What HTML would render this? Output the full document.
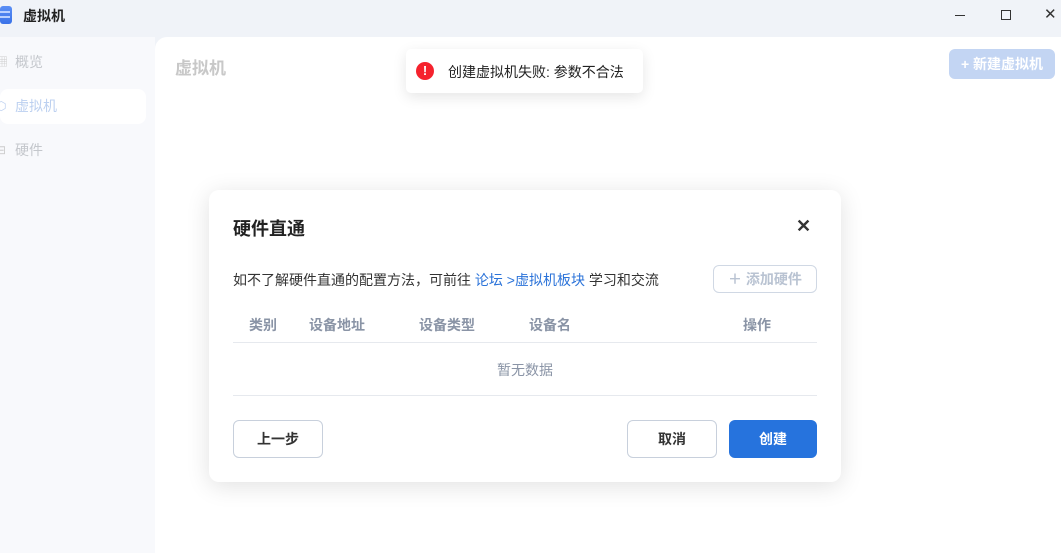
<!DOCTYPE html>
<html><head><meta charset="utf-8"><style>
*{margin:0;padding:0;box-sizing:border-box}
body{width:1061px;height:553px;overflow:hidden;background:#f0f3f8;font-family:"Liberation Sans","Noto Sans CJK SC",sans-serif;position:relative;color:#333}
.abs{position:absolute}
.side{left:0;top:37px;width:155px;height:516px;background:#f8f9fc}
.main{left:155px;top:37px;width:906px;height:516px;background:#fff;border-top-left-radius:12px}
.nav{left:0;width:146px;height:35px;font-size:14px;color:#c4c7cc;padding-left:15px;line-height:35px}
.dlg{left:209px;top:190px;width:632px;height:292px;background:#fff;border-radius:10px;box-shadow:0 4px 24px rgba(0,0,0,.12)}
.btn{position:absolute;height:38px;border-radius:6px;font-size:14px;font-weight:bold;text-align:center;line-height:36px}
.th{position:absolute;top:125px;font-size:14px;font-weight:bold;color:#8a94a6}
</style></head><body>
<div class="abs" style="left:0;top:6px;width:12px;height:18px;border-radius:3px;background:linear-gradient(#5b8ff5,#3a72e8)"></div>
<div class="abs" style="left:0;top:11px;width:10px;height:2px;background:#b9d0ff"></div>
<div class="abs" style="left:0;top:16px;width:10px;height:2px;background:#b9d0ff"></div>
<div class="abs" style="left:23px;top:6px;font-size:14px;font-weight:bold;color:#222">虚拟机</div>
<div class="abs" style="left:955px;top:15px;width:10px;height:1px;background:#333"></div>
<div class="abs" style="left:1001px;top:10px;width:10px;height:10px;border:1px solid #333"></div>
<div class="abs" style="left:1044px;top:5px;font-size:15px;color:#333">✕</div>
<div class="abs side"></div>
<div class="abs main"></div>
<div class="abs nav" style="top:45px"><span style="position:absolute;left:-4px;color:#ccc;font-size:12px">▦</span>概览</div>
<div class="abs nav" style="top:89px;background:#fff;border-radius:8px;color:#bcd0f0"><span style="position:absolute;left:-4px;font-size:12px">⬡</span>虚拟机</div>
<div class="abs nav" style="top:133px"><span style="position:absolute;left:-4px;font-size:12px;color:#ccc">⊟</span>硬件</div>
<div class="abs" style="left:175px;top:54px;font-size:17px;font-weight:bold;color:#c8c8c8">虚拟机</div>
<div class="abs" style="left:949px;top:49px;width:106px;height:30px;border-radius:6px;background:#c3d5f3;color:#fff;font-size:14px;font-weight:bold;text-align:center;line-height:30px">+ 新建虚拟机</div>
<div class="abs" style="left:406px;top:49px;width:237px;height:44px;background:#fff;border-radius:5px;box-shadow:0 4px 14px rgba(0,0,0,.1)"></div>
<div class="abs" style="left:416px;top:62px;width:18px;height:18px;border-radius:50%;background:#f5222d;color:#fff;font-size:13px;font-weight:bold;text-align:center;line-height:18px">!</div>
<div class="abs" style="left:448px;top:62px;font-size:14px;color:#222">创建虚拟机失败: 参数不合法</div>
<div class="abs dlg">
<div class="abs" style="left:24px;top:25px;font-size:18px;font-weight:bold;color:#222">硬件直通</div>
<div class="abs" style="left:587px;top:26px;font-size:18px;color:#333;font-weight:bold">✕</div>
<div class="abs" style="left:24px;top:80px;font-size:14px;color:#333">如不了解硬件直通的配置方法，可前往 <span style="color:#2b73d9">论坛 &gt;虚拟机板块</span> 学习和交流</div>
<div class="abs" style="left:504px;top:75px;width:104px;height:28px;border:1px solid #d0d8e4;border-radius:6px;font-size:14px;font-weight:bold;color:#b9c3d2;text-align:center;line-height:26px">＋ 添加硬件</div>
<div class="th" style="left:40px">类别</div>
<div class="th" style="left:100px">设备地址</div>
<div class="th" style="left:210px">设备类型</div>
<div class="th" style="left:320px">设备名</div>
<div class="th" style="left:534px">操作</div>
<div class="abs" style="left:24px;top:152px;width:584px;height:1px;background:#e6e9ee"></div>
<div class="abs" style="left:288px;top:170px;font-size:14px;color:#8a94a6">暂无数据</div>
<div class="abs" style="left:24px;top:205px;width:584px;height:1px;background:#e6e9ee"></div>
<div class="btn" style="left:24px;top:230px;width:90px;border:1px solid #c8d0dc;color:#333">上一步</div>
<div class="btn" style="left:418px;top:230px;width:90px;border:1px solid #c8d0dc;color:#333">取消</div>
<div class="btn" style="left:520px;top:230px;width:88px;background:#2673dd;color:#fff;line-height:38px">创建</div>
</div>
</body></html>
